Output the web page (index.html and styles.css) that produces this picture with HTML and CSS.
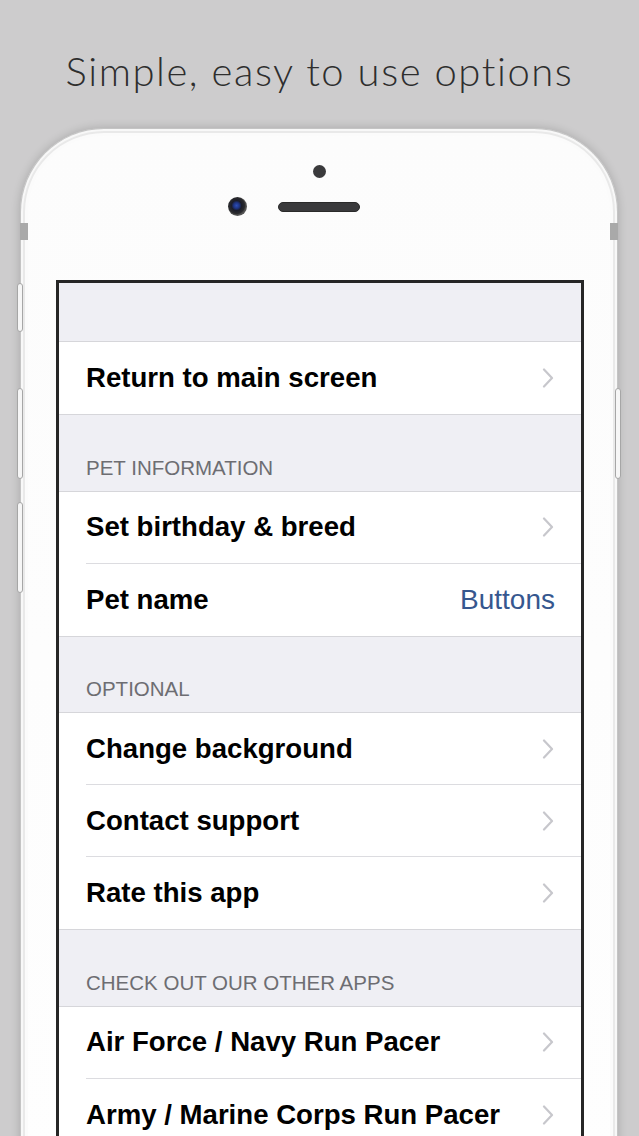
FILE: index.html
```html
<!DOCTYPE html>
<html>
<head>
<meta charset="utf-8">
<link rel="stylesheet" href="styles.css">
</head>
<body>
<div class="page">
  <h1 class="title">Simple, easy to use options</h1>
  <div class="phone">
    <span class="band band-left"></span>
    <span class="band band-right"></span>
    <span class="btn btn-mute"></span>
    <span class="btn btn-vol1"></span>
    <span class="btn btn-vol2"></span>
    <span class="btn btn-power"></span>
    <div class="phone-top">
      <div class="sensor"></div>
      <div class="cam-row">
        <div class="camera"></div>
        <div class="speaker"></div>
      </div>
    </div>
    <div class="screen">
      <div class="spacer"></div>
      <div class="group">
        <div class="row"><span class="label">Return to main screen</span><svg class="chev" viewBox="0 0 12 20"><polyline points="2,1.5 10,10 2,18.5"/></svg></div>
      </div>
      <div class="header">PET INFORMATION</div>
      <div class="group">
        <div class="row"><span class="label">Set birthday &amp; breed</span><svg class="chev" viewBox="0 0 12 20"><polyline points="2,1.5 10,10 2,18.5"/></svg></div>
        <div class="row"><span class="label">Pet name</span><span class="value">Buttons</span></div>
      </div>
      <div class="header">OPTIONAL</div>
      <div class="group">
        <div class="row"><span class="label">Change background</span><svg class="chev" viewBox="0 0 12 20"><polyline points="2,1.5 10,10 2,18.5"/></svg></div>
        <div class="row"><span class="label">Contact support</span><svg class="chev" viewBox="0 0 12 20"><polyline points="2,1.5 10,10 2,18.5"/></svg></div>
        <div class="row"><span class="label">Rate this app</span><svg class="chev" viewBox="0 0 12 20"><polyline points="2,1.5 10,10 2,18.5"/></svg></div>
      </div>
      <div class="header">CHECK OUT OUR OTHER APPS</div>
      <div class="group">
        <div class="row"><span class="label">Air Force / Navy Run Pacer</span><svg class="chev" viewBox="0 0 12 20"><polyline points="2,1.5 10,10 2,18.5"/></svg></div>
        <div class="row"><span class="label">Army / Marine Corps Run Pacer</span><svg class="chev" viewBox="0 0 12 20"><polyline points="2,1.5 10,10 2,18.5"/></svg></div>
      </div>
    </div>
  </div>
</div>
</body>
</html>
```

FILE: styles.css
```css
* { box-sizing: border-box; }
html, body { margin: 0; padding: 0; }
body {
  background: #cdcccd;
  width: 639px;
  height: 1136px;
  overflow: hidden;
}
.page {
  width: 639px;
  height: 1136px;
  overflow: hidden;
  display: flex;
  flex-direction: column;
  align-items: flex-start;
}
.title {
  flex: none;
  align-self: stretch;
  margin: 0;
  padding-top: 48px;
  height: 128px;
  text-align: center;
  font-family: Lato, "Open Sans", sans-serif;
  font-weight: 300;
  font-size: 40px;
  line-height: 46px;
  letter-spacing: 1.55px;
  color: #2e2e2e;
}
.phone {
  position: relative;
  flex: none;
  margin-left: 20px;
  width: 598px;
  height: 1060px;
  background: linear-gradient(180deg, #fcfcfc 0%, #fefefe 100%);
  border: 1px solid #c4c4c4;
  border-bottom: none;
  border-radius: 84px 84px 0 0;
  box-shadow:
    inset 0 0 0 2px #f8f8f8,
    inset 0 0 0 4px #e9e9e9,
    inset 0 0 0 7px #fbfbfb,
    0 0 10px rgba(0, 0, 0, 0.18);
}
.band {
  position: absolute;
  top: 94px;
  width: 8px;
  height: 17px;
  background: #a9a9a9;
}
.band-left { left: -1px; }
.band-right { right: -1px; }
.btn {
  position: absolute;
  width: 6px;
  background: #f6f6f6;
  border: 1px solid #a6a6a6;
  border-radius: 3px;
}
.btn-mute { left: -4px; top: 154px; height: 49px; }
.btn-vol1 { left: -4px; top: 259px; height: 91px; }
.btn-vol2 { left: -4px; top: 373px; height: 91px; }
.btn-power { right: -4px; top: 259px; height: 91px; }

.phone-top {
  height: 151px;
  padding-top: 36px;
  display: flex;
  flex-direction: column;
}
.sensor {
  width: 13px;
  height: 13px;
  border-radius: 50%;
  background: #3a3a3c;
  margin-left: 292px;
}
.cam-row {
  margin-top: 19px;
  display: flex;
  align-items: center;
  padding-left: 207px;
  gap: 31px;
}
.camera {
  width: 19px;
  height: 19px;
  border-radius: 50%;
  background: radial-gradient(circle at 45% 45%, #2d4fb8 0, #1e3380 3px, #1b1d2a 5px, #2b2b2e 8px, #555 9.5px);
}
.speaker {
  width: 82px;
  height: 10px;
  border-radius: 5px;
  background: #3a3a3c;
  border: 1px solid #2a2a2a;
}

.screen {
  margin-left: 35px;
  width: 528px;
  height: 900px;
  border: 3px solid #262626;
  border-bottom: none;
  background: #efeff4;
  font-family: "Liberation Sans", Arial, sans-serif;
}
.spacer { height: 58px; }
.group {
  background: #ffffff;
  border-top: 1px solid #d6d6da;
  border-bottom: 1px solid #d6d6da;
}
.row {
  height: 72px;
  margin-left: 27px;
  padding-right: 27px;
  display: flex;
  align-items: center;
  justify-content: space-between;
  border-bottom: 1px solid #dcdce0;
}
.row:last-child { border-bottom: none; }
.label {
  font-weight: 700;
  font-size: 27.6px;
  color: #000;
}
.value {
  font-size: 28px;
  color: #36578f;
  margin-right: -1px;
}
.chev {
  width: 12px;
  height: 20px;
  flex: none;
}
.chev polyline {
  fill: none;
  stroke: #c7c7cc;
  stroke-width: 2.2;
  stroke-linecap: round;
  stroke-linejoin: round;
}
.header {
  height: 75.5px;
  padding-left: 27px;
  padding-bottom: 13px;
  display: flex;
  align-items: flex-end;
  font-size: 20.5px;
  line-height: 20px;
  color: #6d6d72;
}
```
